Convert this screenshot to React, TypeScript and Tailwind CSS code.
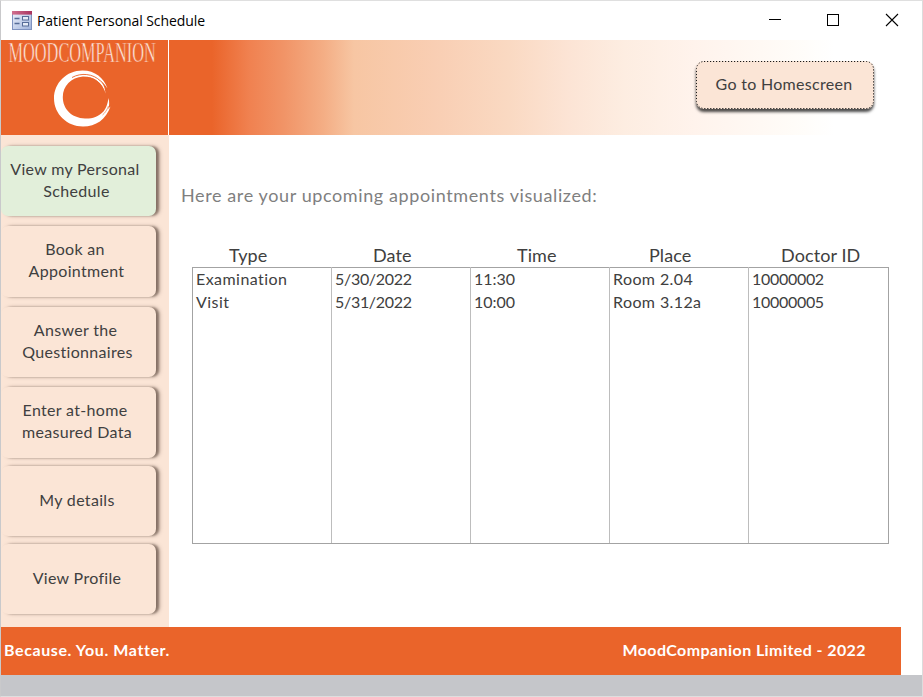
import React from "react";

const columns = [
  { label: "Type", pad: "pl-[37px]", track: "tracking-[0.45px]", rows: ["Examination", "Visit"] },
  { label: "Date", pad: "pl-[42px]", track: "tracking-[-0.3px]", rows: ["5/30/2022", "5/31/2022"] },
  { label: "Time", pad: "pl-[47px]", track: "tracking-[0px]", rows: ["11:30", "10:00"] },
  { label: "Place", pad: "pl-[40px]", track: "tracking-[0.4px]", rows: ["Room 2.04", "Room 3.12a"] },
  { label: "Doctor ID", pad: "pl-[33px]", track: "tracking-[-0.3px]", rows: ["10000002", "10000005"] },
];

const menu = [
  { lines: ["View my Personal", "Schedule"], size: "h-[70px] mb-[10px] bg-[#e2efda]", shift: ["-ml-[7px]", "-ml-[4px]"] },
  { lines: ["Book an", "Appointment"], size: "h-[71px] mb-[10px] bg-[#fbe5d6]", shift: ["-ml-[7px]", "-ml-[4px]"] },
  { lines: ["Answer the", "Questionnaires"], size: "h-[70px] mb-[10px] bg-[#fbe5d6]", shift: ["-ml-[6px]", "-ml-[2px]"] },
  { lines: ["Enter at-home", "measured Data"], size: "h-[71px] mb-[8px] bg-[#fbe5d6]", shift: ["-ml-[7px]", "-ml-[3px]"] },
  { lines: ["My details"], size: "h-[70px] mb-[8px] bg-[#fbe5d6]", shift: ["-ml-[3px]"] },
  { lines: ["View Profile"], size: "h-[70px] bg-[#fbe5d6]", shift: ["-ml-[3px]"] },
];

function FormIcon() {
  return (
    <svg width="20" height="19" viewBox="0 0 20 19" className="block shrink-0">
      <defs>
        <linearGradient id="formBody" x1="0" y1="0" x2="1" y2="1">
          <stop offset="0" stopColor="#eef3fc" />
          <stop offset="1" stopColor="#9fb2da" />
        </linearGradient>
        <linearGradient id="formBar" x1="0" y1="0" x2="1" y2="0">
          <stop offset="0" stopColor="#d0708f" />
          <stop offset="1" stopColor="#a93460" />
        </linearGradient>
      </defs>
      <rect x="0.5" y="0.5" width="19" height="18" fill="url(#formBody)" stroke="#7f93c0" />
      <rect x="0" y="0" width="20" height="3.6" fill="url(#formBar)" />
      <path d="M2.500 7.500h5M2.500 12.500h5" stroke="#566c98" strokeWidth="1.4" />
      <rect x="10.500" y="5.500" width="6" height="3.500" fill="#e6ecf7" stroke="#566c98" />
      <rect x="10.500" y="11.500" width="6" height="3.500" fill="#e6ecf7" stroke="#566c98" />
    </svg>
  );
}

function Logo() {
  return (
    <svg width="167" height="95" viewBox="0 0 167 95" className="block overflow-visible">
      <text
        transform="translate(7.5 22) scale(0.56 1)" textLength="263" lengthAdjust="spacingAndGlyphs"
        fontSize="28.5" fill="#fdeae0" stroke="#ea642a" strokeWidth="0.6" fontFamily="'Liberation Serif', serif"
      >
        MOODCOMPANION
      </text>
      <path
        d="M106.500 48.500C103 38 94 30.500 81.500 30.500C65.500 30.500 53 43 53 58.500C53 74 66 86.500 82 86.500C95 86.500 105 79.500 109.500 66.500L107 69C108.500 66 108.500 62 107.500 58C106.500 65 104.500 69 102.500 71.500C97 77 91 78.800 84 78.500C70.500 78 61.800 69 61.800 57C61.800 46 70 37.500 82 36.500C93 36.500 101 42 104.500 53.500C104 47 102 43.500 98 39.500C101.500 41.500 104.500 45 106.500 48.500Z"
        fill="#fff"
      />
      <path d="M71 37.500C80 32.500 92 33.500 99.500 41" fill="none" stroke="#ea642a" strokeWidth="0.9" />
      <path d="M86 37.300C95 38.500 101 44 104 53" fill="none" stroke="#ea642a" strokeWidth="0.8" />
      <path d="M107.500 66C106 70 104 73 101.500 75" fill="none" stroke="#ea642a" strokeWidth="0.6" />
    </svg>
  );
}

export default function App() {
  return (
    <div className="flex h-[697px] w-[923px] flex-col overflow-hidden border border-t-[#dfdfdf] border-r-[#dcdcdc] border-b-[#dedede] border-l-[#c9c9cb] bg-white font-['Lato','Liberation_Sans',sans-serif] text-[#404040]">
      <div className="flex h-[39px] shrink-0 items-center">
        <div className="pl-[11px] pb-px"><FormIcon /></div>
        <h1 className="ml-[5px] font-['Open_Sans','Noto_Sans',sans-serif] text-[14px] tracking-[-0.07px] whitespace-nowrap text-black">Patient Personal Schedule</h1>
        <svg width="132" height="14" viewBox="0 0 132 14" className="mr-[22px] mb-px ml-auto" fill="none" stroke="#000" shapeRendering="crispEdges">
          <path d="M1 6.500h12" />
          <rect x="59.500" y="1.500" width="11" height="11" />
          <path d="M118 1l12 12M130 1l-12 12" shapeRendering="auto" strokeWidth="1.1" />
        </svg>
      </div>

      <header className="flex h-[95px] shrink-0">
        <div className="w-[167px] bg-[#ea642a]"><Logo /></div>
        <div className="ml-px flex grow justify-end bg-[linear-gradient(90deg,#ea642a_0px,#ea642a_43px,#f08150_80px,#f19467_115px,#f4ae85_155px,#f7c6a3_185px,#f9ceb3_265px,#fad9c2_340px,#fce4d5_400px,#fdede1_455px,#fff3ec_525px,#fffcf8_625px,#ffffff_665px)]">
          <button className="relative mt-[21px] mr-[48px] flex h-[48px] w-[178px] items-center justify-center rounded-[8px] bg-[#fbe5d6] pr-[2px] pb-[2px] text-[16px] tracking-[0.3px] shadow-[0_3px_3px_rgba(0,0,0,0.7)]">
            <svg width="178" height="48" viewBox="0 0 178 48" className="absolute inset-0" fill="none">
              <rect x="0.500" y="0.500" width="177" height="47" rx="7.500" stroke="#1c1c1c" strokeDasharray="1.200 1.800" />
            </svg>
            Go to Homescreen
          </button>
        </div>
      </header>

      <div className="flex h-[492px] shrink-0">
        <nav className="w-[168px] shrink-0 overflow-hidden bg-[#fbe5d6] pt-[11px]">
          {menu.map((item) => (
            <button key={item.lines[0]} className={`flex w-[155px] flex-col items-center justify-center rounded-[7px] pb-[3px] text-[16px] leading-[22px] tracking-[0.32px] shadow-[4px_0_4px_-1px_rgba(70,50,40,0.5),3px_0_2px_rgba(70,50,40,0.35)] ${item.size}`}>
              {item.lines.map((line, i) => (
                <span key={line} className={`whitespace-nowrap ${item.shift[i]}`}>{line}</span>
              ))}
            </button>
          ))}
        </nav>
        <main className="min-w-0 grow">
          <p className="mt-[47px] ml-[12px] text-[18px] leading-[26px] tracking-[0.61px] text-[#7f7f7f]">Here are your upcoming appointments visualized:</p>
          <div className="mt-[36px] ml-[23px] flex">
            {columns.map((c) => (
              <div key={c.label} className={`w-[139px] text-[18px] leading-[23px] tracking-[0.1px] whitespace-nowrap ${c.pad}`}>{c.label}</div>
            ))}
          </div>
          <div className="ml-[23px] flex h-[277px] w-[697px] border border-[#a3a3a3]">
            {columns.map((c) => (
              <div key={c.label} className={`-mt-px w-[139px] border-r border-[#bdbdbd] pl-[3px] text-[16px] leading-[23px] last:border-r-0 ${c.track}`}>
                {c.rows.map((r) => <div key={r}>{r}</div>)}
              </div>
            ))}
          </div>
        </main>
      </div>

      <footer className="flex h-[48px] w-[900px] shrink-0 items-center justify-between bg-[#ea642a] pr-[35px] pb-[3px] pl-[3px] text-[16px] font-bold text-white">
        <span className="tracking-[0.6px]">Because. You. Matter.</span>
        <span className="tracking-[0.42px]">MoodCompanion Limited - 2022</span>
      </footer>
      <div className="grow bg-[#c5c6ca]" />
    </div>
  );
}
